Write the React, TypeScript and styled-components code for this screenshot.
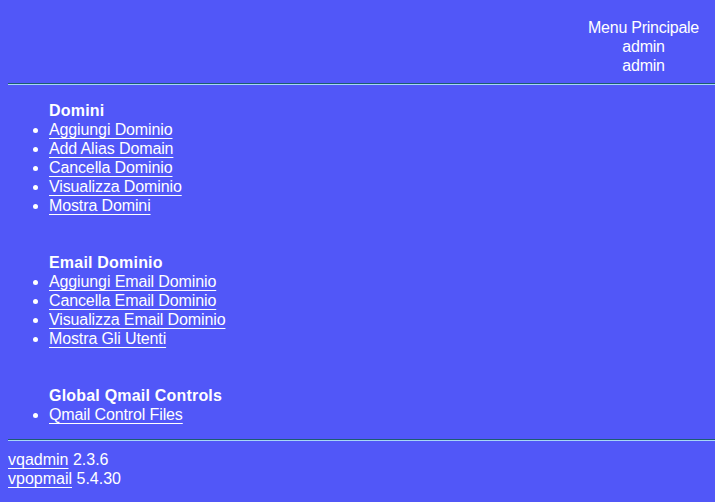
import React from "react";
import styled, { createGlobalStyle } from "styled-components";

const Global = createGlobalStyle`
  html, body { background: #5157f8; }
  body {
    margin: 8px 0 8px 8px;
    color: #ffffff;
    font-family: "Liberation Sans", Arial, sans-serif;
    font-size: 16px;
    line-height: 19px;
    letter-spacing: -0.12px;
    overflow-x: hidden;
  }
`;

const Header = styled.div`
  display: flex;
  justify-content: flex-end;
  padding: 10px 16px 0 0;
`;

const HeaderBlock = styled.div`
  text-align: center;
  letter-spacing: -0.25px;
`;

const Rule = styled.hr`
  margin: 8px 0;
  height: 0;
  border: none;
  border-top: 1px solid #1d5c70;
  border-bottom: 1px solid #a6d6f6;
`;

const Section = styled.ul<{ $last?: boolean }>`
  margin: ${(p) => (p.$last ? "16px 0 15px" : "16px 0 38px")};
  padding-left: 41px;
  list-style: disc;
`;

const Title = styled.li`
  list-style: none;
  font-weight: bold;
  letter-spacing: 0.2px;
`;

const Item = styled.li``;

const Link = styled.a`
  color: #ffffff;
  text-decoration: underline;
  text-decoration-skip-ink: none;
  text-underline-offset: 3px;
`;

const Footer = styled.div`
  padding-top: 1px;
  letter-spacing: 0;
`;

const sections = [
  {
    title: "Domini",
    items: ["Aggiungi Dominio", "Add Alias Domain", "Cancella Dominio", "Visualizza Dominio", "Mostra Domini"],
  },
  {
    title: "Email Dominio",
    items: ["Aggiungi Email Dominio", "Cancella Email Dominio", "Visualizza Email Dominio", "Mostra Gli Utenti"],
  },
  {
    title: "Global Qmail Controls",
    items: ["Qmail Control Files"],
  },
];

export default function App() {
  return (
    <>
      <Global />
      <Header>
        <HeaderBlock>
          Menu Principale
          <br />
          admin
          <br />
          admin
        </HeaderBlock>
      </Header>
      <Rule />
      {sections.map((s, i) => (
        <Section key={s.title} $last={i === sections.length - 1}>
          <Title>{s.title}</Title>
          {s.items.map((it) => (
            <Item key={it}>
              <Link href="#">{it}</Link>
            </Item>
          ))}
        </Section>
      ))}
      <Rule />
      <Footer>
        <Link href="#">vqadmin</Link> 2.3.6
        <br />
        <Link href="#">vpopmail</Link> 5.4.30
      </Footer>
    </>
  );
}
